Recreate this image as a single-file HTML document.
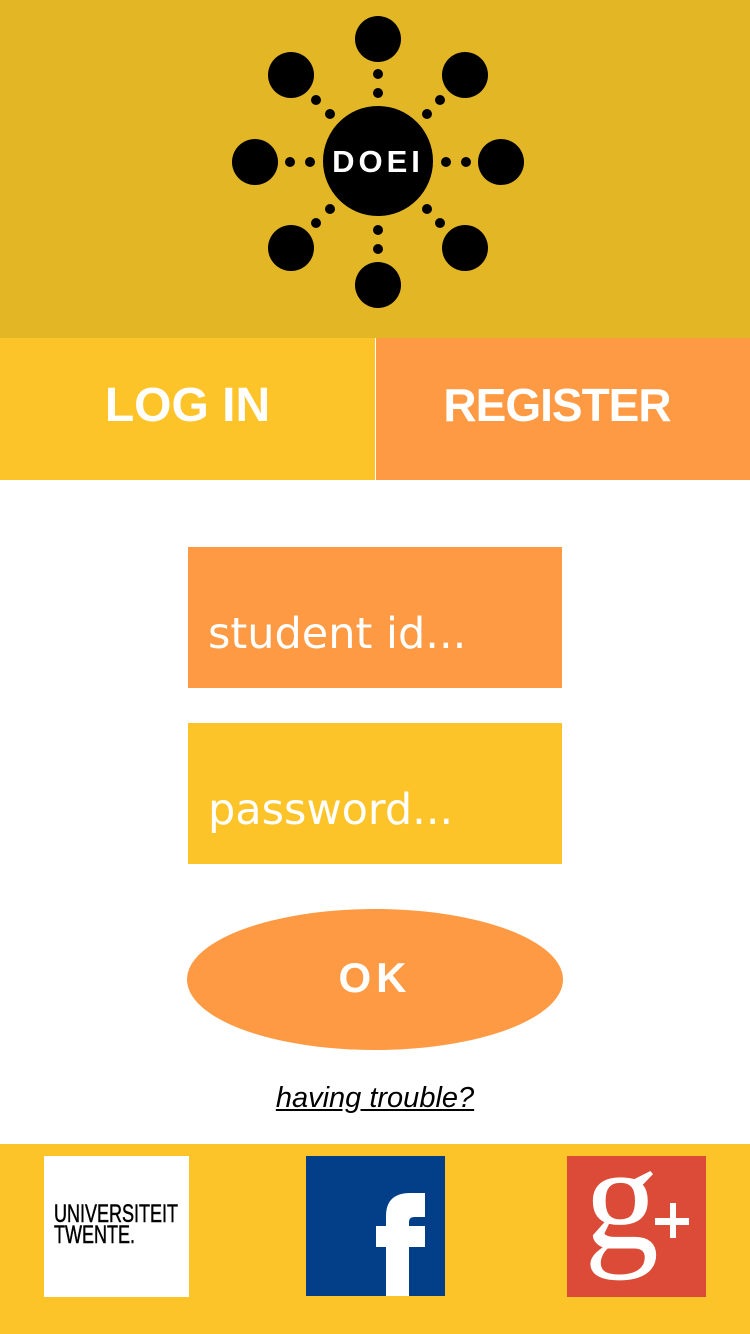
<!DOCTYPE html>
<html><head><meta charset="utf-8"><style>
*{margin:0;padding:0;box-sizing:border-box}
body{width:750px;height:1334px;position:relative;background:#fff;font-family:"Liberation Sans",sans-serif;overflow:hidden}
.a{position:absolute}
</style></head><body>
<div class="a" style="left:0;top:0;width:750px;height:338px;background:#E3B626"></div>
<svg class="a" style="left:0;top:0" width="750" height="338">
<g fill="#000">
<circle cx="378" cy="161" r="55"/>
<circle cx="378" cy="39" r="23"/><circle cx="378" cy="285" r="23"/>
<circle cx="255" cy="162" r="23"/><circle cx="501" cy="162" r="23"/>
<circle cx="291" cy="75" r="23"/><circle cx="465" cy="75" r="23"/>
<circle cx="291" cy="248" r="23"/><circle cx="465" cy="248" r="23"/>
<circle cx="378" cy="74" r="5"/><circle cx="378" cy="93" r="5"/>
<circle cx="378" cy="230" r="5"/><circle cx="378" cy="249" r="5"/>
<circle cx="290" cy="162" r="5"/><circle cx="310" cy="162" r="5"/>
<circle cx="446" cy="162" r="5"/><circle cx="466" cy="162" r="5"/>
<circle cx="316" cy="100" r="5"/><circle cx="330" cy="114" r="5"/>
<circle cx="440" cy="100" r="5"/><circle cx="427" cy="114" r="5"/>
<circle cx="316" cy="223" r="5"/><circle cx="330" cy="209" r="5"/>
<circle cx="440" cy="223" r="5"/><circle cx="427" cy="209" r="5"/>
</g>
<text x="378" y="172" text-anchor="middle" fill="#fff" font-family="Liberation Sans" font-weight="bold" font-size="31" letter-spacing="4">DOEI</text>
</svg>
<div class="a" style="left:0;top:338px;width:375px;height:142px;background:#FDC42A;color:#fff;font-weight:bold;font-size:48px;text-align:center;line-height:136px">LOG IN</div>
<div class="a" style="left:370px;top:338px;width:374px;height:142px;color:#fff;font-weight:bold;font-size:46px;letter-spacing:-1px;text-align:center;line-height:134px;z-index:2">REGISTER</div>
<div class="a" style="left:376px;top:338px;width:374px;height:142px;background:#FF9A44"></div>
<div class="a" style="left:188px;top:547px;width:374px;height:141px;background:#FF9A44;color:#fff;font-family:'DejaVu Sans',sans-serif;font-size:43px;padding:62px 0 0 20px">student id...</div>
<div class="a" style="left:188px;top:723px;width:374px;height:141px;background:#FDC42A;color:#fff;font-family:'DejaVu Sans',sans-serif;font-size:43px;padding:62px 0 0 20px">password...</div>
<div class="a" style="left:187px;top:909px;width:376px;height:141px;border-radius:50%;background:#FF9A44;color:#fff;font-weight:bold;font-size:42px;text-align:center;line-height:138px;letter-spacing:5px">OK</div>
<div class="a" style="left:0;top:1082px;width:750px;text-align:center;font-size:29px;font-style:italic;text-decoration:underline;color:#000">having trouble?</div>
<div class="a" style="left:0;top:1144px;width:750px;height:190px;background:#FDC42A"></div>
<div class="a" style="left:44px;top:1156px;width:145px;height:141px;background:#fff"></div>
<div class="a" style="left:54px;top:1204px;font-size:25px;line-height:21px;color:#000;-webkit-text-stroke:0.5px #000;white-space:nowrap;transform:scaleX(0.72);transform-origin:0 0">UNIVERSITEIT<br>TWENTE.</div>
<div class="a" style="left:306px;top:1156px;width:139px;height:140px;background:#023F88;overflow:hidden">
<svg width="139" height="140"><path fill="#fff" d="M80 140V91H70V70H80V60C80 45 88 37 104 37H119V61H109C104 61 103 63 103 67V70H119V91H103V140Z"/></svg></div>
<div class="a" style="left:567px;top:1156px;width:139px;height:141px;background:#DB4B37;overflow:hidden">
<svg width="139" height="141"><text x="17" y="92" fill="#fff" font-family="Liberation Serif" font-size="150">g</text>
<rect x="88" y="62" width="34" height="7" fill="#fff"/><rect x="103" y="47" width="6" height="35" fill="#fff"/></svg></div>
</body></html>
